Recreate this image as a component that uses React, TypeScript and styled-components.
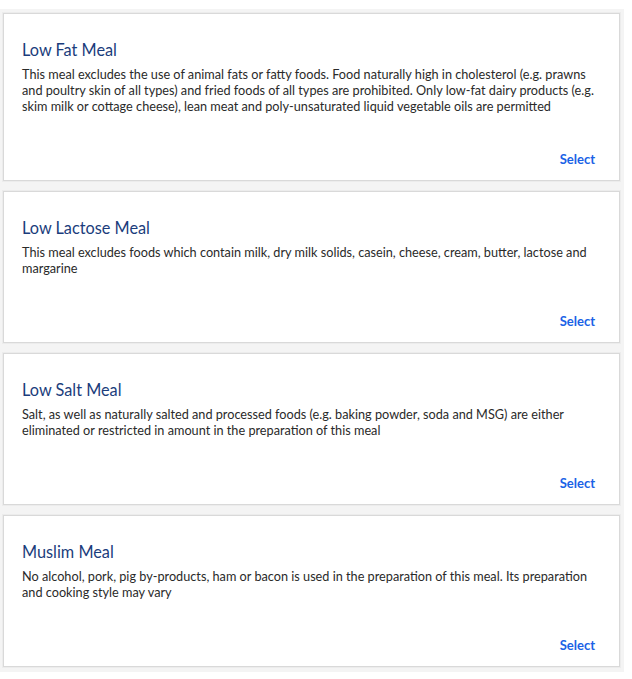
import React from 'react'
import styled, { createGlobalStyle } from 'styled-components'

const GlobalStyle = createGlobalStyle`
  body {
    margin: 0;
    background: #ffffff;
    font-family: Lato, "Liberation Sans", sans-serif;
  }
`

const ListStyled = styled.div`
  margin-top: 9px;
  width: 624px;
  box-sizing: border-box;
  padding: 4px 4px 5px 3px;
  background-color: #f4f4f4;
  display: flex;
  flex-direction: column;
  gap: 10px;
`

const CardStyled = styled.div`
  background-color: #ffffff;
  border: 1px solid #d9d9d9;
  box-shadow: 0 0 0 1px #ececec;
  padding: 26px 24px 13px 18px;
  display: flex;
  flex-direction: column;
`

const TitleStyled = styled.div`
  font-size: 16.3px;
  line-height: 20px;
  color: #1b3d7c;
  margin-bottom: 6px;
`

const DescriptionStyled = styled.div`
  font-size: 12.7px;
  line-height: 16px;
  color: #2a2a2a;
  margin-right: -6px;
`

const SelectStyled = styled.div`
  margin-top: 37px;
  text-align: right;
  font-size: 13px;
  line-height: 16px;
  font-weight: bold;
  color: #1a62e6;
  cursor: pointer;
`

type MealType = {
  id: string,
  title: string,
  description: string
}

const meals: Array<MealType> = [
  {
    id: 'LFML',
    title: 'Low Fat Meal',
    description: 'This meal excludes the use of animal fats or fatty foods. Food naturally high in cholesterol (e.g. prawns and poultry skin of all types) and fried foods of all types are prohibited. Only low-fat dairy products (e.g. skim milk or cottage cheese), lean meat and poly-unsaturated liquid vegetable oils are permitted'
  },
  {
    id: 'NLML',
    title: 'Low Lactose Meal',
    description: 'This meal excludes foods which contain milk, dry milk solids, casein, cheese, cream, butter, lactose and margarine'
  },
  {
    id: 'LSML',
    title: 'Low Salt Meal',
    description: 'Salt, as well as naturally salted and processed foods (e.g. baking powder, soda and MSG) are either eliminated or restricted in amount in the preparation of this meal'
  },
  {
    id: 'MOML',
    title: 'Muslim Meal',
    description: 'No alcohol, pork, pig by-products, ham or bacon is used in the preparation of this meal. Its preparation and cooking style may vary'
  }
]

const MealCard = ({ meal }: { meal: MealType }) => (
  <CardStyled>
    <TitleStyled>{meal.title}</TitleStyled>
    <DescriptionStyled>{meal.description}</DescriptionStyled>
    <SelectStyled>Select</SelectStyled>
  </CardStyled>
)

const App = () => (
  <>
    <GlobalStyle />
    <ListStyled>
      {meals.map(meal => <MealCard key={meal.id} meal={meal} />)}
    </ListStyled>
  </>
)

export default App
